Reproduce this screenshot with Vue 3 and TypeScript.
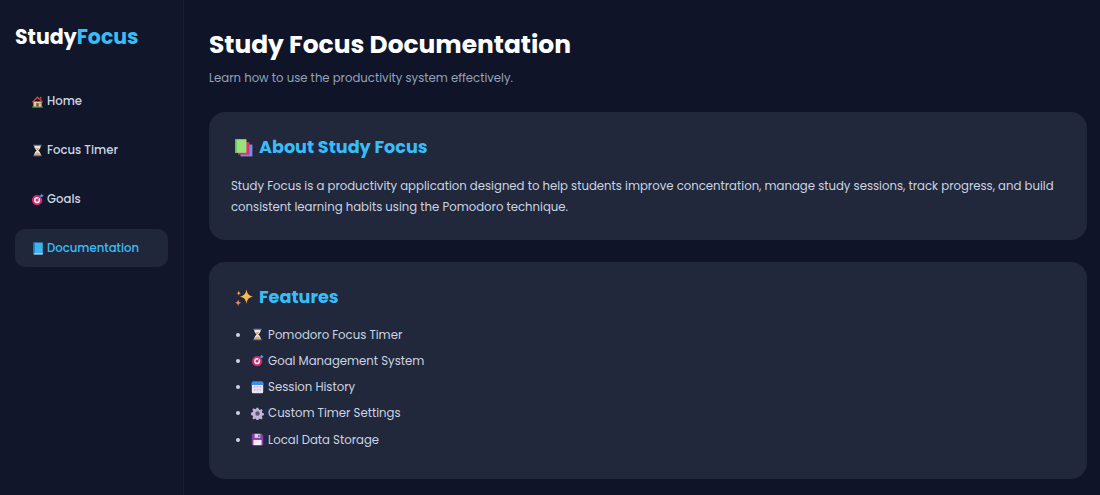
<script setup lang="ts">
type Shape = { d: string; fill: string }

const icons: Record<string, Shape[]> = {
  house: [
    { d: 'M3 8h10v6.500H3z', fill: '#e8c9a0' },
    { d: 'M8 1.500 1 8.500l1 1L8 4l6 5.500 1-1z', fill: '#d9482f' },
    { d: 'M11 2h2v4l-2-2z', fill: '#a8443a' },
    { d: 'M6.500 10h3v4.500h-3z', fill: '#8a4a2c' },
    { d: 'M10.500 9.500h2v2h-2z', fill: '#5cb8e8' },
    { d: 'M1.500 14h13v1.500h-13z', fill: '#5fae57' },
  ],
  hourglass: [
    { d: 'M3 1h10v1.500H3zM3 13.500h10V15H3z', fill: '#6b7f9e' },
    { d: 'M4 2.500h8c0 3-1.800 4.300-3 5.500 1.200 1.200 3 2.500 3 5.500H4c0-3 1.800-4.300 3-5.500C5.800 6.800 4 5.500 4 2.500z', fill: '#dfeaf5' },
    { d: 'M5.300 5h5.400C10 6.300 9 7 8 8 7 7 6 6.300 5.300 5z', fill: '#e9a95c' },
    { d: 'M4.500 13.500c.2-1.500 1.800-2.800 3.500-3.300 1.700.5 3.300 1.800 3.500 3.300z', fill: '#e9a95c' },
  ],
  target: [
    { d: 'M7.500 2.500a6.300 6.300 0 1 0 0 12.600 6.300 6.300 0 0 0 0-12.600z', fill: '#d42a6a' },
    { d: 'M7.500 5a3.800 3.800 0 1 0 0 7.600 3.800 3.800 0 0 0 0-7.600z', fill: '#f4e6ee' },
    { d: 'M7.500 7a1.800 1.800 0 1 0 0 3.600 1.800 1.800 0 0 0 0-3.600z', fill: '#d42a6a' },
    { d: 'M7 8.300 12.500 3l.7.700L7.700 9z', fill: '#4a6fb5' },
    { d: 'M11.500 2.500 13.500.800l.5 1.700 1.700.5-2 2-2.200-.3z', fill: '#4a9be8' },
  ],
  book: [
    { d: 'M3 .500h11.500v15H4.500A1.500 1.500 0 0 1 3 14z', fill: '#38b6ee' },
    { d: 'M3 .500h1.500v15A1.500 1.500 0 0 1 3 14z', fill: '#1c6fb5' },
    { d: 'M4.500 13.500h10v2h-10a1 1 0 0 1 0-2z', fill: '#c9b8dc' },
  ],
  books: [
    { d: 'M5.500 5.500h10v10h-10z', fill: '#7f8be0' },
    { d: 'M3.500 3.500H13v10.500H3.500z', fill: '#d9307c' },
    { d: 'M1 1h9.500v11.500H1z', fill: '#9be07a' },
    { d: 'M1 1h1.300v11.500H1z', fill: '#5fbf5a' },
  ],
  sparkles: [
    { d: 'M10.500 1c.6 4 2 5.400 5.500 6.200-3.500.8-4.900 2.200-5.500 6.300-.6-4.100-2-5.500-5.500-6.300C8.500 6.400 9.900 5 10.500 1z', fill: '#fbb84e' },
    { d: 'M3.500 9.500c.3 2 .9 2.600 2.800 3-1.900.4-2.500 1-2.800 3-.3-2-.9-2.600-2.800-3 1.900-.4 2.500-1 2.800-3z', fill: '#f2866a' },
    { d: 'M4 2c.2 1.500.8 2 2.200 2.300C4.800 4.600 4.200 5.200 4 6.600c-.2-1.400-.8-2-2.200-2.300C3.200 4 3.800 3.500 4 2z', fill: '#f9a94a' },
  ],
  calendar: [
    { d: 'M2.500 1h11A1.500 1.500 0 0 1 15 2.500v11a1.500 1.500 0 0 1-1.500 1.500h-11A1.500 1.500 0 0 1 1 13.500v-11A1.500 1.500 0 0 1 2.500 1z', fill: '#e9e2f4' },
    { d: 'M2.500 1h11A1.500 1.500 0 0 1 15 2.500V5H1V2.500A1.500 1.500 0 0 1 2.500 1z', fill: '#3b8fe8' },
    { d: 'M3.500 6.500h2V8h-2zM7 6.500h2V8H7zM10.500 6.500h2V8h-2zM3.500 10h2v1.500h-2zM7 10h2v1.500H7zM10.500 10h2v1.500h-2z', fill: '#b7a9d6' },
  ],
  gear: [
    { d: 'M6.800 1h2.400l.4 2 1.400.6 1.700-1.100 1.700 1.700-1.100 1.700.6 1.400 2 .4v2.400l-2 .4-.6 1.400 1.100 1.700-1.700 1.700-1.700-1.100-1.400.6-.4 2H6.800l-.4-2-1.400-.6-1.700 1.100-1.700-1.700 1.100-1.700-.6-1.400-2-.4V6.800l2-.4.6-1.400-1.100-1.700 1.700-1.700 1.700 1.100 1.400-.6z', fill: '#c3b5d8' },
    { d: 'M8 5.300a2.700 2.700 0 1 0 0 5.400 2.700 2.700 0 0 0 0-5.400z', fill: '#5d5470' },
  ],
  floppy: [
    { d: 'M1.500 1H13l2 2v11.500a.5.500 0 0 1-.5.500h-13a.5.500 0 0 1-.5-.5v-13a.5.500 0 0 1 .5-.5z', fill: '#8a3fa8' },
    { d: 'M4.500 1h7v5h-7z', fill: '#d9cfe8' },
    { d: 'M9 2h1.500v3H9z', fill: '#5d3a82' },
    { d: 'M3 8.500h10V15H3z', fill: '#f1ecf7' },
  ],
}

const nav = [
  { icon: 'house', label: 'Home' },
  { icon: 'hourglass', label: 'Focus Timer' },
  { icon: 'target', label: 'Goals' },
  { icon: 'book', label: 'Documentation', active: true },
]
const features = [
  { icon: 'hourglass', label: 'Pomodoro Focus Timer' },
  { icon: 'target', label: 'Goal Management System' },
  { icon: 'calendar', label: 'Session History' },
  { icon: 'gear', label: 'Custom Timer Settings' },
  { icon: 'floppy', label: 'Local Data Storage' },
]
</script>

<template>
  <div class="layout">
    <aside class="sidebar">
      <h2 class="logo">Study<span>Focus</span></h2>
      <nav class="nav">
        <a v-for="item in nav" :key="item.label" class="nav-item" :class="{ active: item.active }">
          <svg class="icon" viewBox="0 0 16 16">
            <path v-for="s in icons[item.icon]" :key="s.d" :d="s.d" :fill="s.fill" />
          </svg>
          {{ item.label }}
        </a>
      </nav>
    </aside>
    <main class="content">
      <h1>Study Focus Documentation</h1>
      <p class="subtitle">Learn how to use the productivity system effectively.</p>
      <section class="card">
        <h2>
          <svg class="icon-lg" viewBox="0 0 16 16">
            <path v-for="s in icons.books" :key="s.d" :d="s.d" :fill="s.fill" />
          </svg>
          About Study Focus
        </h2>
        <p>Study Focus is a productivity application designed to help students improve concentration, manage study sessions, track progress, and build consistent learning habits using the Pomodoro technique.</p>
      </section>
      <section class="card">
        <h2>
          <svg class="icon-lg" viewBox="0 0 16 16">
            <path v-for="s in icons.sparkles" :key="s.d" :d="s.d" :fill="s.fill" />
          </svg>
          Features
        </h2>
        <ul>
          <li v-for="f in features" :key="f.label">
            <svg class="icon" viewBox="0 0 16 16">
              <path v-for="s in icons[f.icon]" :key="s.d" :d="s.d" :fill="s.fill" />
            </svg>
            {{ f.label }}
          </li>
        </ul>
      </section>
    </main>
  </div>
</template>

<style>
html, body { margin: 0; background: #0f1429; }
</style>

<style scoped>
.layout {
  display: flex;
  height: 495px;
  overflow: hidden;
  font-family: Poppins, Inter, "Open Sans", sans-serif;
  background: #0f1429;
  color: #e2e8f0;
}
.sidebar {
  width: 184px;
  box-sizing: border-box;
  flex-shrink: 0;
  padding: 24px 15px;
  background: #12162a;
  border-right: 1px solid #1b2036;
}
.logo {
  margin: 0 0 32px;
  font-size: 20.5px;
  line-height: 26px;
  font-weight: 700;
  color: #fff;
}
.logo span { color: #38bdf8; }
.nav { display: flex; flex-direction: column; gap: 11px; }
.nav-item {
  display: flex;
  align-items: center;
  gap: 3px;
  height: 38px;
  box-sizing: border-box;
  padding: 0 16px;
  border-radius: 10px;
  font-size: 11.7px;
  font-weight: 500;
  color: #cbd5e1;
}
.nav-item.active { background: #20273b; color: #38bdf8; }
.icon { width: 13px; height: 13px; flex-shrink: 0; }
.icon-lg { width: 19px; height: 19px; flex-shrink: 0; }
.content { flex: 1; padding: 27px 13px 0 24.500px; }
h1 { margin: 0 0 6px; padding-left: .5px; font-size: 24.9px; line-height: 36px; color: #fff; }
.subtitle { margin: 0 0 25px; padding-left: .5px; font-size: 11.7px; line-height: 18px; color: #94a3b8; }
.card {
  background: #21283c;
  border-radius: 16px;
  padding: 22px 22px 22px 22.500px;
  margin-bottom: 22.500px;
}
.card h2 {
  display: flex;
  align-items: center;
  gap: 6px;
  margin: 0 0 15.500px;
  padding-left: 3px;
  font-size: 17.6px;
  line-height: 26px;
  color: #38bdf8;
}
.card p { margin: 0; font-size: 11.7px; line-height: 21px; color: #cbd5e1; }
ul { margin: 0; padding-left: 20px; }
li { font-size: 11.7px; line-height: 18px; margin-bottom: 8.300px; color: #cbd5e1; }
li .icon { vertical-align: -2.500px; margin-right: 1px; }
</style>
